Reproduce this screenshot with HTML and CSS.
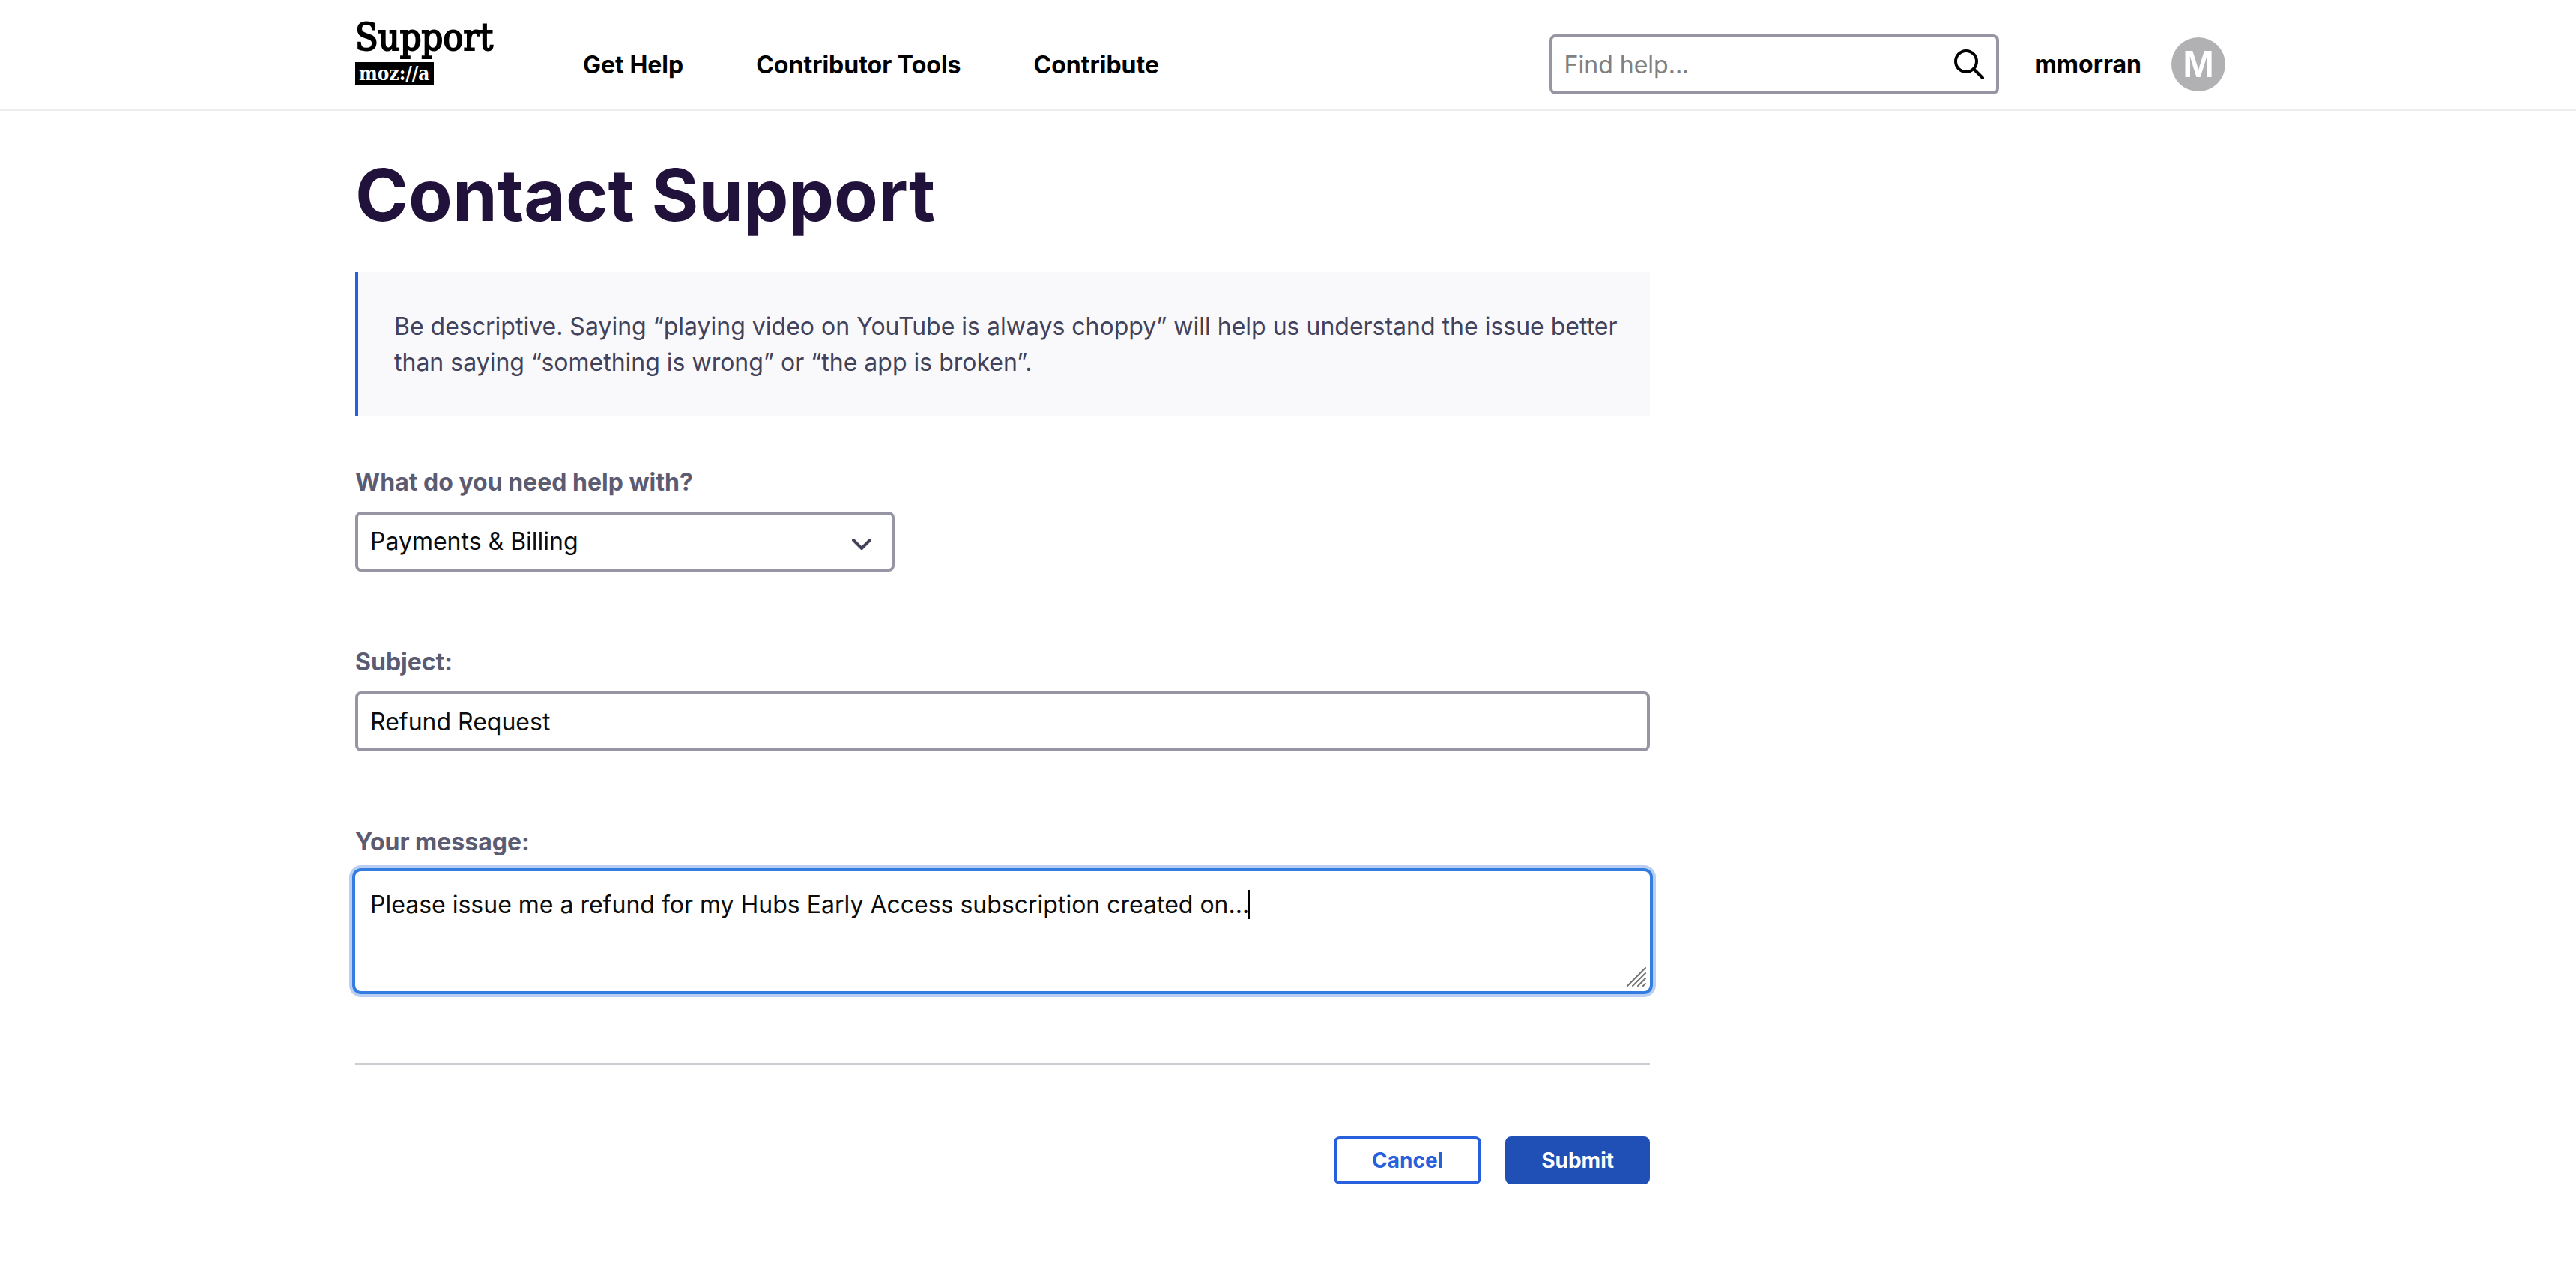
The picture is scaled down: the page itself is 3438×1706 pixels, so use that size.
FILE: index.html
```html
<!DOCTYPE html>
<html lang="en">
<head>
<meta charset="utf-8">
<title>Contact Support</title>
<link rel="stylesheet" href="styles.css">
</head>
<body>
<header class="site-header">
  <div class="container header-row">
    <a class="logo" href="#">
      <span class="logo-name">Support</span>
      <span class="logo-brand">moz://a</span>
    </a>
    <nav class="main-nav">
      <a href="#">Get Help</a>
      <a href="#">Contributor Tools</a>
      <a href="#">Contribute</a>
    </nav>
    <form class="search">
      <input class="search-input" type="search" aria-label="Find help" placeholder="Find help...">
      <button class="search-button" type="button" aria-label="Search">
        <svg viewBox="0 0 40 40" width="40" height="40" fill="none" stroke="#000" stroke-width="4" stroke-linecap="round"><circle cx="16" cy="16" r="14"/><path d="M26 26 38 38"/></svg>
      </button>
    </form>
    <a class="user" href="#">
      <span>mmorran</span>
      <span class="avatar" aria-hidden="true">M</span>
    </a>
  </div>
</header>
<main class="container">
  <div class="content">
    <h1 class="title">Contact Support</h1>
    <p class="notice">Be descriptive. Saying “playing video on YouTube is always choppy” will help us understand the issue better than saying “something is wrong” or “the app is broken”.</p>
    <form class="contact-form">
      <div class="field">
        <label for="topic">What do you need help with?</label>
        <div class="select-wrap">
          <select class="control" id="topic"><option>Payments &amp; Billing</option></select>
          <svg class="chevron" viewBox="0 0 26 16" width="26" height="16" fill="none" stroke="#42425a" stroke-width="4" stroke-linecap="round" stroke-linejoin="round"><path d="M2 2 13 13 24 2"/></svg>
        </div>
      </div>
      <div class="field">
        <label for="subject">Subject:</label>
        <input class="control" id="subject" type="text" value="Refund Request">
      </div>
      <div class="field">
        <label for="message">Your message:</label>
        <div class="message-wrap">
          <textarea class="control message" id="message">Please issue me a refund for my Hubs Early Access subscription created on...</textarea>
          <span class="caret"></span>
          <svg class="grip" viewBox="0 0 26 26" width="26" height="26" stroke="#757575" stroke-width="2" stroke-linecap="round"><path d="M1 25 25 1M8 25 25 8M15 25 25 15M22 25 25 22"/></svg>
        </div>
      </div>
      <div class="actions">
        <button class="button" type="button">Cancel</button>
        <button class="button button-primary" type="button">Submit</button>
      </div>
    </form>
  </div>
</main>
</body>
</html>
```
FILE: styles.css
```css
* {
  box-sizing: border-box;
}

body {
  margin: 0;
  padding-left: 6px;
  background: #fff;
  color: #000;
  font-family: Inter, "Liberation Sans", sans-serif;
  font-size: 32px;
  line-height: 48px;
}

a {
  color: inherit;
  text-decoration: none;
}

.container {
  max-width: 2496px;
  margin: 0 auto;
}

.site-header {
  margin-left: -6px;
  padding-left: 6px;
  border-bottom: 2px solid #ededed;
}

.header-row {
  display: flex;
  align-items: center;
  min-height: 146px;
  padding-top: 26px;
}

.logo {
  display: flex;
  flex-direction: column;
  align-items: flex-start;
  align-self: flex-start;
  width: 208px;
  font-family: "DejaVu Serif Condensed", "DejaVu Serif", serif;
}

.logo-name {
  font-size: 50px;
  line-height: 48px;
  -webkit-text-stroke: 2px #000;
}

.logo-brand {
  margin-top: 9px;
  padding: 0 5px;
  background: #000;
  color: #fff;
  font-size: 26px;
  font-weight: 700;
  line-height: 30px;
}

.main-nav {
  display: flex;
  gap: 97px;
  margin-left: 96px;
  padding-top: 2px;
  font-weight: 700;
}

.search {
  position: relative;
  width: 600px;
  margin-left: auto;
}

.search-input {
  display: block;
  width: 100%;
  height: 80px;
  padding: 0 84px 0 16px;
  border: 4px solid #9595a3;
  border-radius: 8px;
  background: #fff;
  font: inherit;
  outline: 0;
  appearance: none;
}

.search-input::placeholder {
  color: #808080;
}

.search-button {
  position: absolute;
  top: 20px;
  right: 20px;
  padding: 0;
  border: 0;
  background: none;
}

.search-button svg {
  display: block;
}

.user {
  display: flex;
  align-items: center;
  gap: 40px;
  margin-left: 48px;
  font-weight: 700;
}

.avatar {
  width: 72px;
  height: 72px;
  border-radius: 50%;
  background: #b1b1b3;
  color: #fff;
  font-family: "Liberation Sans", sans-serif;
  font-size: 50px;
  line-height: 72px;
  text-align: center;
}

.content {
  max-width: 1728px;
}

.title {
  margin: 0;
  padding: 56px 0 47px;
  color: #20123a;
  font-size: 96px;
  font-weight: 700;
  line-height: 112px;
}

.notice {
  margin: 0 0 64px;
  padding: 49px 32px 47px 48px;
  border-left: 4px solid #2760dd;
  background: #f9f9fb;
  color: #42425a;
}

.field {
  display: flex;
  flex-direction: column;
  gap: 14px;
  margin-bottom: 96px;
}

.field label {
  color: #5b5b72;
  font-weight: 700;
  line-height: 50px;
}

.control {
  display: block;
  width: 100%;
  height: 80px;
  margin: 0;
  padding: 0 16px;
  border: 4px solid #9595a3;
  border-radius: 8px;
  background: #fff;
  color: #0c0c0d;
  font: inherit;
  outline: 0;
  appearance: none;
}

.select-wrap {
  position: relative;
  max-width: 720px;
}

.chevron {
  position: absolute;
  top: 36px;
  right: 31px;
  pointer-events: none;
}

.message-wrap {
  position: relative;
}

.message {
  height: 160px;
  padding: 17px 16px;
  border-color: #fff;
  box-shadow: 0 0 0 4px #347de0, 0 0 0 8px #b9cef2;
  resize: none;
}

.caret {
  position: absolute;
  top: 25px;
  left: 1192px;
  width: 2px;
  height: 39px;
  background: #000;
}

.grip {
  position: absolute;
  right: 5px;
  bottom: 6px;
}

.actions {
  display: flex;
  justify-content: flex-end;
  gap: 32px;
  padding: 96px 0;
  border-top: 2px solid #cdcdd4;
}

.button {
  height: 64px;
  padding: 0 47px;
  border: 4px solid #2760dd;
  border-radius: 8px;
  background: #fff;
  color: #2760dd;
  font-family: inherit;
  font-size: 28px;
  font-weight: 700;
}

.button-primary {
  padding: 0 44px;
  border-color: #2050b5;
  background: #2050b5;
  color: #fff;
}
```
